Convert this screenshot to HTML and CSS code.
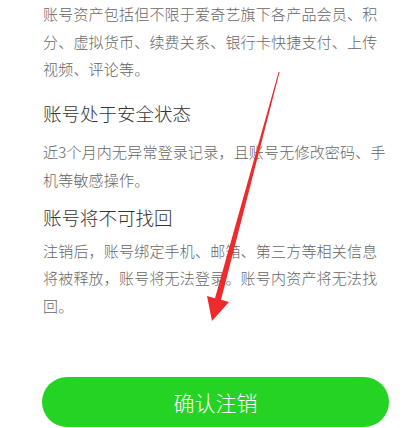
FILE: index.html
```html
<!DOCTYPE html>
<html lang="zh-CN">
<head>
    <meta charset="UTF-8">
    <meta name="viewport" content="width=device-width, initial-scale=1.0">
    <title>注销账号</title>
    <link rel="stylesheet" href="styles.css">
</head>
<body>
    <!-- Main Content -->
    <main class="content">
        <p class="desc">账号资产包括但不限于爱奇艺旗下各产品会员、积分、虚拟货币、续费关系、银行卡快捷支付、上传视频、评论等。</p>

        <h2 class="title title-first">账号处于安全状态</h2>
        <p class="desc">近3个月内无异常登录记录，且账号无修改密码、手机等敏感操作。</p>

        <h2 class="title">账号将不可找回</h2>
        <p class="desc">注销后，账号绑定手机、邮箱、第三方等相关信息将被释放，账号将无法登录。账号内资产将无法找回。</p>

        <button class="button">确认注销</button>
    </main>

    <!-- Arrow -->
    <svg class="arrow" width="415" height="428" viewBox="0 0 415 428">
        <polygon points="278.6,72 279.6,72 221,299.8 229,302 212,321 207,296 215,298.2" fill="#ee2a2c"/>
    </svg>
</body>
</html>
```

FILE: styles.css
```css
body {
    margin: 0;
    padding: 0;
    background-color: #fff;
    font-family: "Noto Sans CJK SC", "Noto Sans", sans-serif;
    position: relative;
    overflow: hidden;
}
.content {
    padding: 0 25px 0 43px;
}
.desc {
    margin: 0;
    font-size: 15px;
    font-weight: 300;
    letter-spacing: 0.2px;
    line-height: 27.5px;
    color: #666;
}
.title {
    margin: 11px 0 5px;
    font-size: 18.5px;
    font-weight: 300;
    line-height: 27.5px;
    color: #333;
}
.title-first {
    margin: 17px 0 11px;
}
.button {
    display: block;
    width: 100%;
    height: 50px;
    margin: 58px 0 0 -1px;
    border: none;
    border-radius: 25px;
    background-color: #24d324;
    color: #fff;
    font-family: inherit;
    font-size: 21px;
    font-weight: 300;
    cursor: pointer;
}
.arrow {
    position: absolute;
    left: 0;
    top: 0;
    pointer-events: none;
}
```
